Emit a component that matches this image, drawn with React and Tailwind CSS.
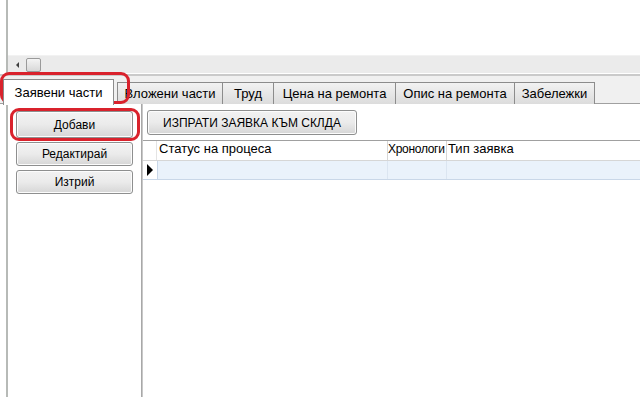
import React from 'react';

const tabs = [
    { label: 'Вложени части', w: 'w-[106px]' },
    { label: 'Труд', w: 'w-[52px]' },
    { label: 'Цена на ремонта', w: 'w-[123px]' },
    { label: 'Опис на ремонта', w: 'w-[120px]' },
    { label: 'Забележки', w: 'w-[81px]' },
];

function WinButton({ children, className = '' }) {
    return (
        <div
            className={
                'flex items-center justify-center rounded-[3px] border border-[#8e8f8f] bg-gradient-to-b from-[#f2f2f2] via-[#ebebeb] to-[#d6d6d6] text-[12px] text-black shadow-[inset_0_0_0_1px_#fcfcfc] ' +
                className
            }
        >
            {children}
        </div>
    );
}

export default function App() {
    return (
        <div
            className="relative w-[640px] h-[397px] overflow-hidden bg-white text-black"
            style={{ fontFamily: '"Liberation Sans", Arial, sans-serif' }}
        >
            {/* top: empty area + horizontal scrollbar */}
            <div className="flex">
                <div className="w-[6px]" />
                <div className="flex-1 border-l-2 border-[#b7bab7]">
                    <div className="h-[55px] bg-white" />
                    <div className="h-[18px] bg-[#ebebeb] border-t border-[#f2f2f2] flex items-center">
                        <div className="w-[18px] flex items-center justify-center">
                            <div className="w-0 h-0 border-y-[3px] border-y-transparent border-r-[3px] border-r-[#404040]" />
                        </div>
                        <div className="w-[15px] h-[14px] rounded-[2px] border border-[#9a9a9a] bg-gradient-to-b from-[#f4f4f4] to-[#d8d8d8]" />
                    </div>
                </div>
            </div>

            {/* tab strip */}
            <div className="h-[31px] border-t border-white bg-[#f0f0f0] relative">
                <div className="h-[2px] bg-[#cacaca]" />
                <div className="absolute left-0 right-0 bottom-0 h-px bg-[#a0a0a0]" />
                <div className="absolute left-[3px] bottom-0 flex items-end">
                    <div className="relative z-10 h-[26px] w-[111px] -mb-px border border-b-0 border-[#8c8c8c] bg-white flex items-center justify-center text-[13px] pt-px">
                        Заявени части
                    </div>
                    <div className="flex items-end ml-[3px]">
                        {tabs.map((t) => (
                            <div
                                key={t.label}
                                className={
                                    t.w +
                                    ' h-[22px] -ml-px first:ml-0 border border-b-0 border-[#8c8c8c] bg-gradient-to-b from-[#f2f2f2] to-[#dcdcdc] flex items-center justify-center text-[13px] whitespace-nowrap'
                                }
                            >
                                {t.label}
                            </div>
                        ))}
                    </div>
                </div>
            </div>

            {/* content */}
            <div className="flex h-[293px]">
                <div className="w-[6px]" />
                <div className="w-[135px] border-l-2 border-[#b7bab7] flex flex-col items-center pt-[7px] gap-[4px]">
                    <WinButton className="w-[117px] h-[27px]">Добави</WinButton>
                    <WinButton className="w-[117px] h-[24px]">Редактирай</WinButton>
                    <WinButton className="w-[117px] h-[24px]">Изтрий</WinButton>
                </div>
                <div className="w-[2px] bg-[#a8a8a8] border-r border-[#c8c8c8]" />
                <div className="flex-1 flex flex-col">
                    <div className="pt-[6px] pl-[4px] h-[36px]">
                        <WinButton className="w-[210px] h-[25px]">ИЗПРАТИ ЗАЯВКА КЪМ СКЛДА</WinButton>
                    </div>
                    <div className="border-t border-[#a0a0a0]">
                        <div className="flex h-[20px] text-[13px] border-b border-[#d6d6d6]">
                            <div className="w-[14px] border-r border-[#e4e4e4]" />
                            <div className="w-[231px] border-r border-[#d6d6d6] flex items-end pb-[2px] pl-[2px]">Статус на процеса</div>
                            <div className="w-[59px] border-r border-[#d6d6d6] flex items-end pb-[2px] text-[12px] tracking-[-0.3px] whitespace-nowrap">Хронологи</div>
                            <div className="flex-1 flex items-end pb-[2px] pl-[1px]">Тип заявка</div>
                        </div>
                        <div className="flex h-[19px] border-b border-[#c9d7e8]">
                            <div className="w-[14px] flex items-center justify-center">
                                <div className="w-0 h-0 border-y-[6px] border-y-transparent border-l-[6px] border-l-black" />
                            </div>
                            <div className="w-[231px] bg-[#eaf2fb] border-r border-[#dbe5f1] border-l border-l-[#c9d7e8]" />
                            <div className="w-[59px] bg-[#eaf2fb] border-r border-[#dbe5f1]" />
                            <div className="flex-1 bg-[#eaf2fb]" />
                        </div>
                    </div>
                </div>
            </div>

            {/* red annotation marks */}
            <div className="absolute left-[0px] top-[72px] w-[130px] h-[32px] rounded-[9px] border-[3px] border-[#d9222c]" />
            <div className="absolute left-[10px] top-[108px] w-[130px] h-[33px] rounded-[9px] border-[3px] border-[#d9222c]" />
        </div>
    );
}
